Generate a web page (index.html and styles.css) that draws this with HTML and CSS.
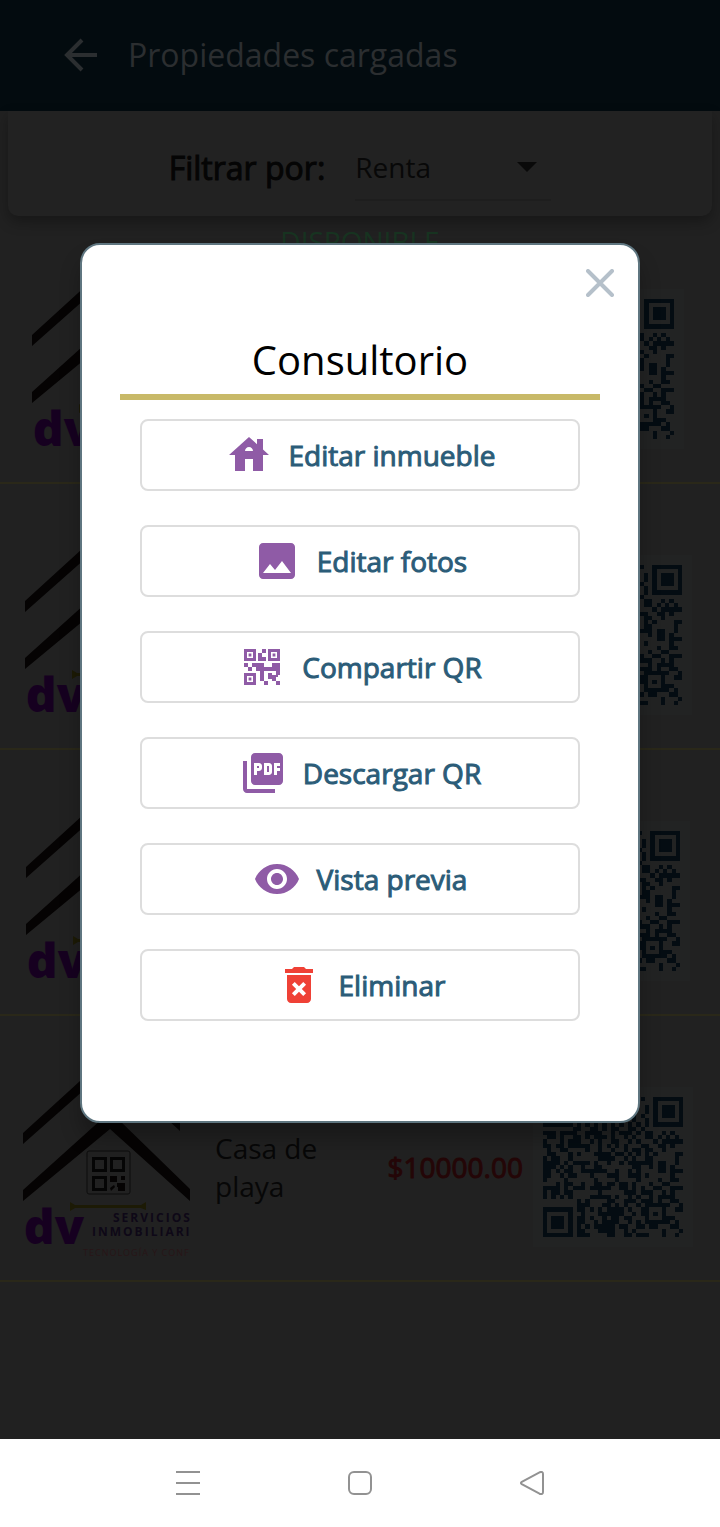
FILE: index.html
```html
<!DOCTYPE html>
<html lang="es">
<head>
<meta charset="utf-8">
<meta name="viewport" content="width=device-width, initial-scale=1">
<title>Propiedades cargadas</title>
<link rel="stylesheet" href="styles.css">
</head>
<body>
<svg class="defs" aria-hidden="true">
  <symbol id="logo" viewBox="0 0 167 206">
    <path class="roof" d="M0 69 57 17 87 -10 157 54V67L87 3 0 80Z"/>
    <path class="roof" d="M0 126 80 54H94L167 125V137L87 65 0 137Z"/>
    <rect class="code-frame" x="64" y="87" width="43" height="43" rx="2"/>
    <path class="code-line" d="M70.500 94.500h12v12h-12zM88.500 94.500h12v12h-12zM70.500 113.500h12v12h-12z"/>
    <path class="roof" d="M87 112h7v6h-7zM98 112h4v4h-4zM94 119h8v8h-7v-4h-1zM87 124l4-3 1 2-4 4z"/>
    <path class="rule" d="M47 138l5 3h66l5-3v8l-5-2H52l-5 3z"/>
    <text class="brand" x="61" y="180" text-anchor="end">adv</text>
    <text class="tag" x="90" y="158">SERVICIOS</text>
    <text class="tag" x="69" y="172">INMOBILIARIOS</text>
    <text class="sub" x="60" y="192">TECNOLOGÍA Y CONFIANZA</text>
  </symbol>
  <symbol id="qr" viewBox="0 0 33 33"><path id="qr-path" class="qr-ink" shape-rendering="crispEdges"/></symbol>
</svg>

<div class="screen">
  <main class="app">
    <header class="topbar">
      <button class="back" type="button" aria-label="Volver">
        <svg viewBox="0 0 48 48"><path d="M39 24H10M24 9 9 24l15 15" fill="none" stroke="currentColor" stroke-width="4"/></svg>
      </button>
      <h1 class="topbar-title">Propiedades cargadas</h1>
    </header>

    <section class="filter">
      <label class="filter-label" for="tipo">Filtrar por:</label>
      <span class="picker">
        <select class="picker-select" id="tipo"><option>Renta</option><option>Venta</option></select>
        <svg class="picker-caret" viewBox="0 0 20 10" aria-hidden="true"><path d="M0 0h20L10 10z"/></svg>
      </span>
    </section>

    <section class="list">
      <article class="item">
        <p class="status">DISPONIBLE</p>
        <div class="row row-a">
          <svg class="photo"><use href="#logo"/></svg>
          <svg class="qr"><use href="#qr"/></svg>
        </div>
      </article>
      <article class="item">
        <p class="status"></p>
        <div class="row row-b">
          <svg class="photo"><use href="#logo"/></svg>
          <svg class="qr"><use href="#qr"/></svg>
        </div>
      </article>
      <article class="item">
        <p class="status"></p>
        <div class="row row-c">
          <svg class="photo"><use href="#logo"/></svg>
          <svg class="qr"><use href="#qr"/></svg>
        </div>
      </article>
      <article class="item">
        <p class="status"></p>
        <div class="row row-d">
          <svg class="photo"><use href="#logo"/></svg>
          <p class="name">Casa de playa</p>
          <p class="price">$10000.00</p>
          <svg class="qr"><use href="#qr"/></svg>
        </div>
      </article>
    </section>

    <div class="overlay">
      <div class="dialog" role="dialog" aria-labelledby="dialog-title">
        <button class="close" type="button" aria-label="Cerrar">
          <svg viewBox="0 0 28 28"><path d="M2 2l24 24M26 2 2 26" stroke="currentColor" stroke-width="4" stroke-linecap="round"/></svg>
        </button>
        <h2 class="dialog-title" id="dialog-title">Consultorio</h2>
        <div class="actions">
          <button class="action" type="button">
            <svg class="icon" viewBox="0 0 24 24"><path d="M19 9.300V4h-3v2.600L12 3 2 12h3v8h5v-6h4v6h5v-8h3l-3-2.700zm-9 .7c0-1.100.9-2 2-2s2 .9 2 2h-4z"/></svg>
            Editar inmueble
          </button>
          <button class="action" type="button">
            <svg class="icon" viewBox="0 0 24 24"><path d="M21 19V5c0-1.100-.9-2-2-2H5c-1.100 0-2 .9-2 2v14c0 1.100.9 2 2 2h14c1.100 0 2-.9 2-2zM8.500 13.500l2.500 3.010L14.500 12l4.500 6H5l3.500-4.500z"/></svg>
            Editar fotos
          </button>
          <button class="action" type="button">
            <svg class="icon" viewBox="0 0 24 24"><path fill-rule="evenodd" d="M3 3h6v6H3zM4.500 4.500v3h3v-3zM15 3h6v6h-6zM16.500 4.500v3h3v-3zM3 15h6v6H3zM4.500 16.500v3h3v-3z"/><path d="M5.300 5.300h1.400v1.400H5.300zM17.300 5.300h1.400v1.400h-1.400zM5.300 17.300h1.400v1.400H5.300zM12 3h2v2h-2zM10 5h2v2h2v2h-4zM3 10h2v2H3zM5 12h2v2H5zM7 10h6v2h4v2h-4v5h-2v-5h-2v-2H7zM17 10h2v2h-2zM19 10h2v6h-2v-2h-2v-2h2zM15 15h2v1h2v3h2v2h-2v-2h-2v-1h-2zM19 16h1v1h-1zM13 19h2v2h-2z"/></svg>
            Compartir QR
          </button>
          <button class="action" type="button">
            <svg class="icon" viewBox="0 0 24 24"><path d="M20 2H8c-1.100 0-2 .9-2 2v12c0 1.100.9 2 2 2h12c1.100 0 2-.9 2-2V4c0-1.100-.9-2-2-2zm-8.500 7.500c0 .83-.67 1.500-1.500 1.500H9v2H7.500V7H10c.83 0 1.500.67 1.500 1.500v1zm5 2c0 .83-.67 1.500-1.500 1.500h-2.500V7H15c.83 0 1.500.67 1.500 1.500v3zm4-3H19v1h1.500V11H19v2h-1.500V7h3v1.500zM9 9.500h1v-1H9v1zM4 6H2v14c0 1.100.9 2 2 2h14v-2H4V6zm10 5.500h1v-3h-1v3z"/></svg>
            Descargar QR
          </button>
          <button class="action" type="button">
            <svg class="icon" viewBox="0 0 24 24"><path d="M12 4.500C7 4.500 2.730 7.610 1 12c1.730 4.390 6 7.500 11 7.500s9.270-3.110 11-7.500c-1.730-4.390-6-7.500-11-7.500zM12 17c-2.760 0-5-2.240-5-5s2.240-5 5-5 5 2.240 5 5-2.240 5-5 5zm0-8c-1.660 0-3 1.340-3 3s1.340 3 3 3 3-1.340 3-3-1.340-3-3-3z"/></svg>
            Vista previa
          </button>
          <button class="action" type="button">
            <svg class="icon icon-danger" viewBox="0 0 24 24"><path d="M6 19c0 1.100.9 2 2 2h8c1.100 0 2-.9 2-2V7H6v12zm2.460-7.120l1.410-1.410L12 12.590l2.120-2.120 1.410 1.410L13.410 14l2.120 2.120-1.410 1.410L12 15.410l-2.120 2.120-1.410-1.410L10.590 14l-2.130-2.120zM15.500 4l-1-1h-5l-1 1H5v2h14V4z"/></svg>
            Eliminar
          </button>
        </div>
      </div>
    </div>
  </main>

  <nav class="navbar" aria-label="Sistema">
    <button class="nav-button" type="button" aria-label="Recientes"><svg viewBox="0 0 24 24"><path d="M0 1h24M0 12h24M0 23h24"/></svg></button>
    <button class="nav-button" type="button" aria-label="Inicio"><svg viewBox="0 0 24 24"><rect x="1" y="1" width="22" height="22" rx="5"/></svg></button>
    <button class="nav-button" type="button" aria-label="Atrás"><svg viewBox="0 0 24 24"><path d="M1.800 10.800 19.500 1.300Q23 0 23 3V21Q23 24 19.500 22.700L1.800 13.200Q0 12 1.800 10.800Z"/></svg></button>
  </nav>
</div>
<script src="qr.js"></script>
</body>
</html>
```
FILE: styles.css
```css
* {
  box-sizing: border-box;
}

body {
  margin: 0;
  background: #222222;
  font-family: "Open Sans", "Noto Sans", sans-serif;
}

h1, h2, p {
  margin: 0;
  font-weight: 400;
}

button, select {
  margin: 0;
  padding: 0;
  border: 0;
  background: none;
  color: inherit;
  font: inherit;
}

.defs {
  position: absolute;
  width: 0;
  height: 0;
}

.screen {
  display: flex;
  flex-direction: column;
  min-height: 100vh;
}

.app {
  position: relative;
  flex: 1;
  background: #212121;
}

.topbar {
  display: flex;
  align-items: center;
  gap: 22px;
  padding: 31px 58px 32px;
  background: #030b0f;
  color: #2b2e30;
}

.back {
  width: 48px;
  height: 48px;
}

.back svg {
  display: block;
}

.topbar-title {
  font-size: 32px;
  line-height: 46px;
}

.filter {
  display: flex;
  justify-content: center;
  align-items: center;
  gap: 30px;
  margin: 0 8px;
  padding: 24px 0 15px;
  border-radius: 0 0 10px 10px;
  background: #222222;
  box-shadow: 0 6px 14px rgba(0, 0, 0, 0.3);
  color: #050505;
}

.filter-label {
  font-size: 32px;
  line-height: 64px;
  -webkit-text-stroke: 1px currentColor;
}

.picker {
  display: grid;
  align-items: center;
  width: 196px;
  border-bottom: 2px solid #1e1e1e;
}

.picker-select {
  grid-area: 1 / 1;
  appearance: none;
  height: 64px;
  font-size: 28px;
  color: #080808;
}

.picker-caret {
  grid-area: 1 / 1;
  justify-self: end;
  width: 20px;
  height: 10px;
  margin-right: 14px;
  fill: #090909;
  pointer-events: none;
}

.item {
  padding-bottom: 10px;
  border-bottom: 2px solid #2a2819;
}

.item:first-child {
  padding-top: 2px;
}

.status {
  height: 48px;
  font-size: 28px;
  line-height: 46px;
  text-align: center;
  color: #173320;
}

.row {
  display: flex;
  align-items: center;
  height: 206px;
}

.row-a { padding: 0 36px 0 32px; }
.row-b { padding: 0 28px 0 25px; }
.row-c { padding: 0 30px 0 26px; }
.row-d { padding: 0 27px 0 23px; }

.photo {
  flex: none;
  width: 167px;
  height: 206px;
}

.qr {
  flex: none;
  width: 160px;
  height: 160px;
  margin-left: auto;
  padding: 10px;
  background: #222323;
}

.name {
  flex: 1;
  max-width: 140px;
  margin-left: 25px;
  font-size: 28px;
  line-height: 38px;
  color: #070707;
}

.price {
  margin-left: auto;
  padding-right: 10px;
  font-size: 28px;
  line-height: 38px;
  color: #240607;
  -webkit-text-stroke: 1px currentColor;
}

.price + .qr {
  margin-left: 0;
}

.roof { fill: #050303; }
.code-frame { fill: none; stroke: #0d0d0d; stroke-width: 1; }
.code-line { fill: none; stroke: #050505; stroke-width: 3; }
.rule { fill: #1c1a05; }
.brand { font-size: 48px; font-weight: 800; fill: #160020; }
.tag { font-size: 12px; font-weight: 700; letter-spacing: 2px; fill: #0e0817; }
.sub { font-size: 9px; letter-spacing: 1px; fill: #281517; }
.qr-ink { fill: #040c12; }

.overlay {
  position: absolute;
  inset: 0;
  display: grid;
  justify-items: center;
  align-items: center;
  padding: 0 80px 73px;
}

.dialog {
  position: relative;
  width: 100%;
  max-width: 640px;
  padding: 88px 38px 100px;
  border: 2px solid #5f7680;
  border-radius: 20px;
  background: #ffffff;
  box-shadow: 0 16px 20px rgba(0, 0, 0, 0.25);
}

.close {
  position: absolute;
  top: 24px;
  right: 24px;
  width: 28px;
  height: 28px;
  color: #b5c0ca;
}

.close svg {
  display: block;
}

.dialog-title {
  padding-bottom: 7px;
  border-bottom: 6px solid #c8b968;
  font-size: 40px;
  line-height: 54px;
  text-align: center;
  color: #000000;
}

.actions {
  display: flex;
  flex-direction: column;
  gap: 34px;
  padding: 19px 20px 0;
}

.action {
  display: flex;
  justify-content: center;
  align-items: center;
  gap: 16px;
  height: 72px;
  border: 2px solid #dddddd;
  border-radius: 8px;
  font-size: 28px;
  color: #2b5c78;
  -webkit-text-stroke: 1px currentColor;
}

.icon {
  flex: none;
  width: 48px;
  height: 48px;
  fill: #8f5ba6;
  -webkit-text-stroke: 0;
}

.icon-danger {
  fill: #ef4136;
}

.navbar {
  display: flex;
  justify-content: center;
  gap: 124px;
  padding: 20px 0;
  background: #ffffff;
}

.nav-button {
  display: grid;
  place-items: center;
  width: 48px;
  height: 48px;
}

.nav-button svg {
  width: 24px;
  height: 24px;
  fill: none;
  stroke: #929292;
  stroke-width: 2;
}
```
FILE: qr.js
```js
const rows = [
  "#######..#.##.#..##.#..#..#######",
  "#.....#.##..#.##..#.##....#.....#",
  "#.###.#..##..#.#.##..#..#.#.###.#",
  "#.###.#.#..##.#..#.##...#.#.###.#",
  "#.###.#..#.#.##.#..#.#.#..#.###.#",
  "#.....#.#.##..#.##.#.#..#.#.....#",
  "#######.#.#.#.#.#.#.#.#.#.#######",
  ".......##..##.#.##..##.#.........",
  "###.####..####..#.###.#.##..#.#..",
  ".##.#..##.#.###.#..#.#..##.#.#.#.",
  "#...#.###..#.#..##..#.#...#.#####",
  "##.##.#####..#.#.#.#...##..##.#..",
  ".#..##....#..#..#..#.##.##..#....",
  ".##...#.#...####.##.#.#.#.#....##",
  "#.##..#......####..#.#..##.....#.",
  "####.#.####.#..#..#.######.##..#.",
  "###.#.#..#..##.......##..#.##.#..",
  "##.#.##..######..#..#.#....##.###",
  "##..#.##...#...###..###.#.....#..",
  "#....#......#....#....#....#..##.",
  "...#.##..#..##.##.##.#...#..##...",
  "####.#.###.#####..##.#.#..##..###",
  "#.##.##......#.....###.###..#.#..",
  "#.#.#.#....#####.#..#.#..#.####..",
  "........#.#....##..###.###.#..##.",
  "........###...##.#.#..#.######..#",
  "#######.##.#.#.####.#..##...#..##",
  "#.....#..#...######..#.##.#.#....",
  "#.###.#.##.#..#.##.##...#...###..",
  "#.###.#.##..#.####..#.#.######.#.",
  "#.###.#.#.#.#####.##..##.##...##.",
  "#.....#.##...####..#.#......#...#",
  "#######.###....##..##.###...#..#."
];

const path = rows.map((row, y) =>
  [...row].map((cell, x) => cell === "#" ? `M${x} ${y}h1v1h-1z` : "").join("")
).join("");

document.getElementById("qr-path").setAttribute("d", path);
```
